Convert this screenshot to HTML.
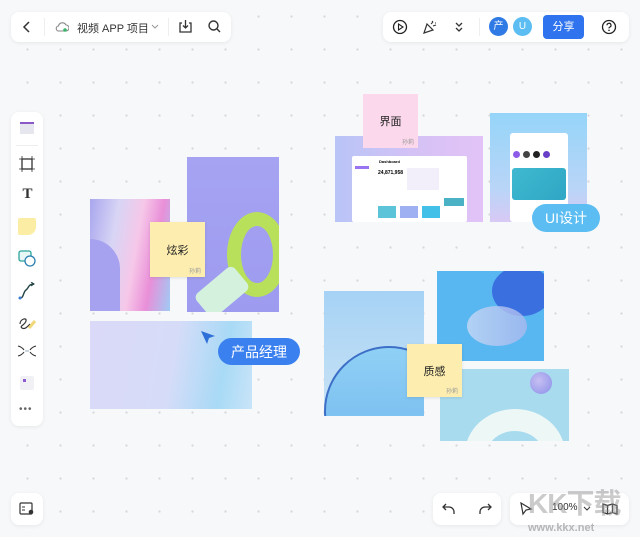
<!DOCTYPE html>
<html><head><meta charset="utf-8"><style>
*{margin:0;padding:0;box-sizing:border-box}
body{width:640px;height:537px;overflow:hidden;position:relative;font-family:"Liberation Sans","Noto Sans CJK SC",sans-serif;
background-color:#f7f8fa;background-image:radial-gradient(circle,#d3d6dc 1px,transparent 1.3px);background-size:33px 33px;background-position:11px 0px}
.p{position:absolute;background:#fff;border-radius:8px;box-shadow:0 1px 4px rgba(0,0,0,.07)}
.a{position:absolute}
.st{position:absolute;font-size:11px;color:#222;display:flex;align-items:center;justify-content:center;box-shadow:0 1px 3px rgba(0,0,0,.1)}
.st small{position:absolute;right:4px;bottom:2px;font-size:6px;color:#999}
.tag{position:absolute;color:#fff;border-radius:14px;display:flex;align-items:center;justify-content:center;font-size:14px}
svg{display:block}
</style></head><body>
<!-- top left -->
<div class="p" style="left:11px;top:12px;width:220px;height:30px">
<svg class="a" style="left:9px;top:8px" width="14" height="14" viewBox="0 0 14 14"><path d="M9 2L4 7l5 5" stroke="#333" stroke-width="1.5" fill="none"/></svg>
<div class="a" style="left:33px;top:6px;width:1px;height:18px;background:#eee"></div>
<svg class="a" style="left:44px;top:9px" width="14" height="12" viewBox="0 0 14 12"><path d="M4 10h7a3 3 0 0 0 0-6 4 4 0 0 0-7.5 1A2.5 2.5 0 0 0 4 10z" stroke="#888" stroke-width="1.1" fill="none"/><circle cx="10" cy="9" r="1.8" fill="#3bb56a"/></svg>
<div class="a" style="left:66px;top:8px;font-size:11px;color:#333;white-space:nowrap">视频 APP 项目</div>
<svg class="a" style="left:140px;top:11px" width="8" height="8"><path d="M1 2l3 3 3-3" stroke="#999" fill="none"/></svg>
<div class="a" style="left:157px;top:6px;width:1px;height:18px;background:#eee"></div>
<svg class="a" style="left:167px;top:7px" width="15" height="15" viewBox="0 0 15 15"><path d="M4 4H2v9h11V4h-2M7.5 1v8M5 6.5l2.5 2.5 2.5-2.5" stroke="#333" stroke-width="1.3" fill="none"/></svg>
<svg class="a" style="left:196px;top:7px" width="15" height="15" viewBox="0 0 15 15"><circle cx="6.5" cy="6.5" r="4.5" stroke="#333" stroke-width="1.4" fill="none"/><path d="M10 10l3 3" stroke="#333" stroke-width="1.4"/></svg>
</div>
<!-- top right -->
<div class="p" style="left:383px;top:12px;width:246px;height:30px">
<svg class="a" style="left:9px;top:7px" width="16" height="16" viewBox="0 0 16 16"><circle cx="8" cy="8" r="6.5" stroke="#222" stroke-width="1.3" fill="none"/><path d="M6.5 5v6l4.5-3z" stroke="#222" stroke-width="1.1" fill="none"/></svg>
<svg class="a" style="left:39px;top:7px" width="16" height="16" viewBox="0 0 16 16"><path d="M2 14l3-9 6 6z" stroke="#333" stroke-width="1.2" fill="none"/><path d="M9 5l2-2M11 7l3-1M10 2l1 1M13 4h1" stroke="#333" stroke-width="1.1"/></svg>
<svg class="a" style="left:71px;top:9px" width="10" height="12" viewBox="0 0 10 12"><path d="M2 2l3 3 3-3M2 7l3 3 3-3" stroke="#333" stroke-width="1.3" fill="none"/></svg>
<div class="a" style="left:96px;top:6px;width:1px;height:18px;background:#eee"></div>
<div class="a" style="left:106px;top:5px;width:19px;height:19px;border-radius:50%;background:#2f7ae5;color:#fff;font-size:10px;text-align:center;line-height:19px">产</div>
<div class="a" style="left:130px;top:5px;width:19px;height:19px;border-radius:50%;background:#5bbdf2;color:#fff;font-size:10px;text-align:center;line-height:19px">U</div>
<div class="a" style="left:160px;top:3px;width:41px;height:24px;border-radius:4px;background:#2f74ee;color:#fff;font-size:11px;text-align:center;line-height:24px">分享</div>
<svg class="a" style="left:218px;top:7px" width="16" height="16" viewBox="0 0 16 16"><circle cx="8" cy="8" r="6.5" stroke="#222" stroke-width="1.3" fill="none"/><path d="M6 6.3a2 2 0 1 1 2.6 1.9c-.5.2-.6.6-.6 1.2" stroke="#222" stroke-width="1.2" fill="none"/><circle cx="8" cy="11.3" r=".8" fill="#222"/></svg>
</div>
<!-- left toolbar -->
<div class="p" style="left:11px;top:112px;width:32px;height:314px">
<div class="a" style="left:9px;top:10px;width:14px;height:12px;background:#e6e6ee;border-top:2px solid #8a5bc6"></div>
<div class="a" style="left:5px;top:33px;width:22px;height:1px;background:#eee"></div>
<svg class="a" style="left:8px;top:44px" width="16" height="16" viewBox="0 0 16 16"><rect x="3" y="3" width="10" height="10" stroke="#333" stroke-width="1.3" fill="none"/><path d="M3 0v16M13 0v16M0 3h16M0 13h16" stroke="#333" stroke-width=".8"/></svg>
<div class="a" style="left:9px;top:75px;width:15px;height:15px;font-family:'Liberation Serif',serif;font-size:15px;font-weight:bold;color:#333;line-height:15px;text-align:center">T</div>
<div class="a" style="left:7px;top:106px;width:18px;height:17px;background:#fbeea4;border-radius:2px 2px 8px 2px"></div>
<svg class="a" style="left:7px;top:138px" width="19" height="18" viewBox="0 0 19 18"><rect x="1" y="1" width="12" height="10" rx="2" stroke="#2aa59c" stroke-width="1.3" fill="#e8f6f5"/><circle cx="12" cy="11" r="5" stroke="#2a7fb0" stroke-width="1.3" fill="#fff"/></svg>
<svg class="a" style="left:7px;top:170px" width="18" height="18" viewBox="0 0 18 18"><path d="M2 16c4 0 3-6 6-8s2-6 8-6" stroke="#244" stroke-width="1.4" fill="none"/><circle cx="2" cy="16" r="1.5" fill="#3a7bd5"/><path d="M13 0l3 2-3 2" stroke="#244" fill="none"/></svg>
<svg class="a" style="left:6px;top:202px" width="20" height="18" viewBox="0 0 20 18"><path d="M3 10c0-5 7-7 6-3s-7 5-4 7 6-2 8-4" stroke="#333" stroke-width="1.2" fill="none"/><path d="M12 14l6-7" stroke="#f0d77a" stroke-width="3"/></svg>
<svg class="a" style="left:6px;top:232px" width="20" height="14" viewBox="0 0 20 14"><path d="M1 2q4 1 6 4M19 2q-4 1-6 4M1 12q4-1 6-4M19 12q-4-1-6-4" stroke="#333" stroke-width="1.1" fill="none"/><path d="M8 7h4" stroke="#9ab" stroke-width="1"/></svg>
<div class="a" style="left:9px;top:264px;width:14px;height:14px;background:#f1f0f5;border-radius:2px"><div style="margin:3px;width:3px;height:3px;background:#8d5bd0"></div></div>
<div class="a" style="left:8px;top:295px;font-size:10px;letter-spacing:1px;color:#666;line-height:6px">•••</div>
</div>
<div class="p" style="left:11px;top:493px;width:32px;height:32px">
<svg class="a" style="left:8px;top:9px" width="16" height="14" viewBox="0 0 16 14"><rect x="1" y="1" width="12" height="11" rx="1" stroke="#333" fill="none" stroke-width="1.2"/><path d="M3 5h3M3 8h3" stroke="#333"/><circle cx="12" cy="10" r="2.3" fill="#333"/></svg>
</div>
<!-- bottom right -->
<div class="p" style="left:433px;top:493px;width:68px;height:32px">
<svg class="a" style="left:9px;top:9px" width="14" height="14" viewBox="0 0 14 14"><path d="M4 2L1 5l3 3M1 5h6a5 5 0 0 1 5 5v2" stroke="#333" stroke-width="1.3" fill="none"/></svg>
<svg class="a" style="left:45px;top:9px" width="14" height="14" viewBox="0 0 14 14"><path d="M10 2l3 3-3 3M13 5H7a5 5 0 0 0-5 5v2" stroke="#333" stroke-width="1.3" fill="none"/></svg>
</div>
<div class="p" style="left:510px;top:493px;width:119px;height:32px">
<svg class="a" style="left:9px;top:9px" width="14" height="14" viewBox="0 0 14 14"><path d="M2 1l10 6-5 1-3 4z" stroke="#333" stroke-width="1.2" fill="none"/></svg>
<div class="a" style="left:42px;top:9px;font-size:10px;color:#333">100%</div>
<svg class="a" style="left:73px;top:13px" width="8" height="6"><path d="M1 1l3 3 3-3" stroke="#333" fill="none"/></svg>
<svg class="a" style="left:92px;top:9px" width="16" height="14" viewBox="0 0 16 14"><path d="M1 2l4.5 1.5L10.5 2 15 3.5V12l-4.5-1.5L5.5 12 1 10.5zM5.5 3.5V12M10.5 2v8.5" stroke="#333" stroke-width="1.2" fill="none"/></svg>
</div>
<div class="a" style="left:528px;top:482px;font-size:28px;font-weight:bold;color:rgba(140,140,140,.45);letter-spacing:-1px">KK下载</div>
<div class="a" style="left:528px;top:522px;font-size:11px;font-weight:bold;color:rgba(140,140,140,.6)">www.kkx.net</div>
<!-- left group -->
<div class="a" style="left:90px;top:199px;width:80px;height:112px;background:linear-gradient(100deg,#a9a6ee 0%,#d8d5f5 30%,#f6c7e8 55%,#e98fd8 75%,#9fcbf5 100%)"><div style="position:absolute;left:0;top:40px;width:30px;height:72px;background:#a6a2ef;border-radius:0 60px 0 0"></div></div>
<div class="a" style="left:187px;top:157px;width:92px;height:155px;background:linear-gradient(180deg,#a6a3f2,#9d9bf0);overflow:hidden">
<div style="position:absolute;left:40px;top:55px;width:60px;height:85px;border-radius:50%;border:14px solid #b8e05a"></div>
<div style="position:absolute;left:10px;top:120px;width:50px;height:30px;background:#d4f1de;transform:rotate(-40deg);border-radius:6px"></div></div>
<div class="st" style="left:150px;top:222px;width:55px;height:55px;background:#fdeeb0">炫彩<small>孙莉</small></div>
<div class="a" style="left:90px;top:321px;width:162px;height:88px;background:linear-gradient(100deg,#dad9f8 0%,#d6dcf8 50%,#a8daf6 80%,#c9e4f8 100%)"></div>
<svg class="a" style="left:200px;top:330px" width="16" height="16" viewBox="0 0 16 16"><path d="M1 1l14 5-6 2-2 6z" fill="#2f6fd8"/></svg>
<div class="tag" style="left:218px;top:338px;width:82px;height:27px;background:#3b80ef">产品经理</div>
<!-- top right group -->
<div class="a" style="left:335px;top:136px;width:148px;height:86px;background:linear-gradient(90deg,#b9c4f7,#d7c2f5 60%,#e3c3f7)">
<div style="position:absolute;left:17px;top:20px;width:115px;height:66px;background:#fff;border-radius:2px">
<div style="position:absolute;left:27px;top:3px;font-size:4px;font-weight:bold">Dashboard</div>
<div style="position:absolute;left:26px;top:14px;font-size:5px;font-weight:bold">24,871,958</div>
<div style="position:absolute;left:55px;top:12px;width:32px;height:22px;background:#f2eefa"></div>
<div style="position:absolute;left:26px;top:50px;width:18px;height:12px;background:#5bc4d8"></div>
<div style="position:absolute;left:48px;top:50px;width:18px;height:12px;background:#9fb0f2"></div>
<div style="position:absolute;left:70px;top:50px;width:18px;height:12px;background:#42c0e8"></div>
<div style="position:absolute;left:92px;top:42px;width:20px;height:8px;background:#4ab2c4"></div>
<div style="position:absolute;left:3px;top:10px;width:14px;height:3px;background:#9b74f2"></div>
</div></div>
<div class="st" style="left:363px;top:94px;width:55px;height:54px;background:#fcd8ec;box-shadow:none">界面<small>孙莉</small></div>
<div class="a" style="left:490px;top:113px;width:97px;height:109px;background:linear-gradient(180deg,#95d5f9,#b9d5f7 70%,#d8c9f5)">
<div style="position:absolute;left:20px;top:20px;width:58px;height:89px;background:#fff;border-radius:3px">
<div style="position:absolute;left:3px;top:18px;width:7px;height:7px;border-radius:50%;background:#8d5be8"></div>
<div style="position:absolute;left:13px;top:18px;width:7px;height:7px;border-radius:50%;background:#444"></div>
<div style="position:absolute;left:23px;top:18px;width:7px;height:7px;border-radius:50%;background:#222"></div>
<div style="position:absolute;left:33px;top:18px;width:7px;height:7px;border-radius:50%;background:#6a3fc8"></div>
<div style="position:absolute;left:2px;top:35px;width:54px;height:32px;background:linear-gradient(135deg,#3fb8d0,#2fa7c5);border-radius:3px"></div>
</div></div>
<div class="tag" style="left:532px;top:204px;width:68px;height:28px;background:#5cbdf3;font-size:14px">UI设计</div>
<!-- bottom right group -->
<div class="a" style="left:324px;top:291px;width:100px;height:125px;background:linear-gradient(180deg,#a6d2f5,#c9e3f5);overflow:hidden">
<div style="position:absolute;left:0;top:55px;width:130px;height:130px;border-radius:50%;background:linear-gradient(180deg,#8fd0f5,#6fb5ee);border:2px solid #3d6fc7"></div></div>
<div class="a" style="left:437px;top:271px;width:107px;height:90px;background:#58b7f0;overflow:hidden">
<div style="position:absolute;left:55px;top:-5px;width:60px;height:50px;border-radius:50%;background:#3a6fe0"></div>
<div style="position:absolute;left:30px;top:35px;width:60px;height:40px;border-radius:50%;background:linear-gradient(90deg,#c8d8f5,#a9b8ef);opacity:.8"></div></div>
<div class="a" style="left:440px;top:369px;width:129px;height:72px;background:#a9dbef;overflow:hidden">
<div style="position:absolute;left:90px;top:3px;width:22px;height:22px;border-radius:50%;background:radial-gradient(circle at 40% 40%,#c7bff3,#8a8fe8)"></div>
<div style="position:absolute;left:25px;top:40px;width:100px;height:90px;border-radius:50%;border:22px solid #edf7f6"></div></div>
<div class="st" style="left:407px;top:344px;width:55px;height:53px;background:#fdeeb0">质感<small>孙莉</small></div>
</body></html>
